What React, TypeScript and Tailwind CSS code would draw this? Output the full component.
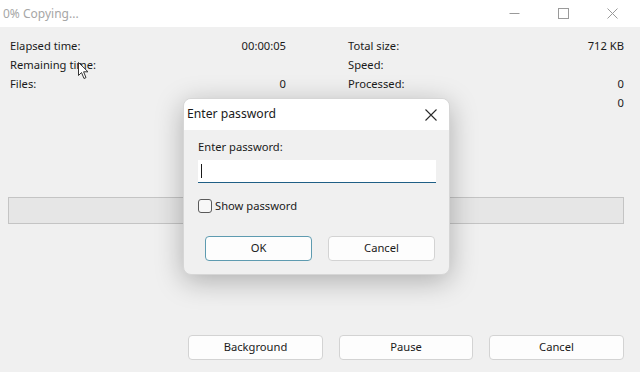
import React from "react";

const Row = ({ label, value }: { label: string; value?: string }) => (
  <div className="flex h-[19px] items-center justify-between">
    <span>{label}</span>
    <span>{value ?? ""}</span>
  </div>
);

export default function App() {
  return (
    <div
      className="relative h-[372px] w-[640px] overflow-hidden bg-[#f0f0f0] text-[11.2px] text-[#1a1a1a]"
      style={{ fontFamily: '"Noto Sans", "Open Sans", sans-serif' }}
    >
      {/* Title bar */}
      <div className="flex h-[27px] items-center bg-white">
        <span className="pl-[3px] text-[12px] text-[#a6a6a6]">0% Copying...</span>
        <div className="ml-auto flex h-full items-center">
          <div className="flex h-full w-[49px] items-center justify-center">
            <svg width="11" height="11" viewBox="0 0 11 11">
              <line x1="0.5" y1="5.5" x2="10.5" y2="5.5" stroke="#9a9a9a" strokeWidth="1" />
            </svg>
          </div>
          <div className="flex h-full w-[49px] items-center justify-center">
            <svg width="11" height="11" viewBox="0 0 11 11">
              <rect x="0.5" y="0.5" width="10" height="10" fill="none" stroke="#9a9a9a" strokeWidth="1" />
            </svg>
          </div>
          <div className="flex h-full w-[52px] items-center justify-center pr-[3px]">
            <svg width="11" height="11" viewBox="0 0 11 11">
              <path d="M0.5 0.5L10.5 10.5M10.5 0.5L0.5 10.5" stroke="#9a9a9a" strokeWidth="1" />
            </svg>
          </div>
        </div>
      </div>

      {/* Stats */}
      <div className="grid grid-cols-[276px_276px] gap-x-[62px] pl-[10px] pt-[10px]">
        <div>
          <Row label="Elapsed time:" value="00:00:05" />
          <Row label="Remaining time:" />
          <Row label="Files:" value="0" />
        </div>
        <div>
          <Row label="Total size:" value="712 KB" />
          <Row label="Speed:" />
          <Row label="Processed:" value="0" />
          <Row label="Packed size:" value="0" />
        </div>
      </div>

      {/* Progress bar */}
      <div className="ml-[8px] mt-[84px] h-[27px] w-[616px] border border-[#c4c4c4] bg-[#e6e6e6]" />

      {/* Bottom buttons */}
      <div className="ml-[188px] mt-[111px] flex gap-[16px]">
        <button className="h-[25px] w-[135px] rounded-[4px] border border-[#d3d3d3] bg-[#fdfdfd] text-[11.2px] text-[#1a1a1a]">
          Background
        </button>
        <button className="h-[25px] w-[134px] rounded-[4px] border border-[#d3d3d3] bg-[#fdfdfd] text-[11.2px] text-[#1a1a1a]">
          Pause
        </button>
        <button className="h-[25px] w-[135px] rounded-[4px] border border-[#d3d3d3] bg-[#fdfdfd] text-[11.2px] text-[#1a1a1a]">
          Cancel
        </button>
      </div>

      {/* Mouse cursor */}
      <svg className="absolute left-[78px] top-[62px]" width="12" height="18" viewBox="0 0 12 18">
        <path
          d="M0.5 0.5 L0.5 13.5 L3.5 10.5 L6 16.5 L8 15.6 L5.6 9.8 L10 9.8 Z"
          fill="#ffffff"
          stroke="#333333"
          strokeWidth="1"
          strokeLinejoin="round"
        />
      </svg>

      {/* Password dialog */}
      <div className="absolute left-[183px] top-[98px] h-[177px] w-[267px] overflow-hidden rounded-[8px] border border-[#d6d6d6] bg-[#f0f0f0] shadow-[0_6px_28px_rgba(0,0,0,0.28)]">
        <div className="flex h-[31px] items-center justify-between bg-white pl-[3px]">
          <span className="text-[12.2px] text-[#1a1a1a]">Enter password</span>
          <div className="flex w-[34px] items-center justify-center pr-[2px]">
            <svg width="12" height="12" viewBox="0 0 12 12">
              <path d="M0.5 0.5L11.5 11.5M11.5 0.5L0.5 11.5" stroke="#2a2a2a" strokeWidth="1.1" />
            </svg>
          </div>
        </div>
        <div className="px-[14px] pt-[10px]">
          <div className="h-[14px] leading-[14px]">Enter password:</div>
          <div className="mt-[6px] flex h-[23px] w-[238px] items-center border-b border-[#1f5f86] bg-white pl-[3px]">
            <div className="h-[14px] w-[1px] bg-[#1a1a1a]" />
          </div>
          <div className="mt-[16px] flex items-center gap-[3px]">
            <div className="h-[14px] w-[14px] rounded-[3px] border border-[#5a5a5a] bg-[#f7f7f7]" />
            <span className="leading-[14px]">Show password</span>
          </div>
          <div className="ml-[7px] mt-[23px] flex gap-[16px]">
            <button className="h-[25px] w-[108px] rounded-[4px] border border-[#5e9bb0] bg-[#fdfdfd] text-[11.2px] text-[#1a1a1a]">
              OK
            </button>
            <button className="h-[25px] w-[108px] rounded-[4px] border border-[#d3d3d3] bg-[#fdfdfd] text-[11.2px] text-[#1a1a1a]">
              Cancel
            </button>
          </div>
        </div>
      </div>
    </div>
  );
}
